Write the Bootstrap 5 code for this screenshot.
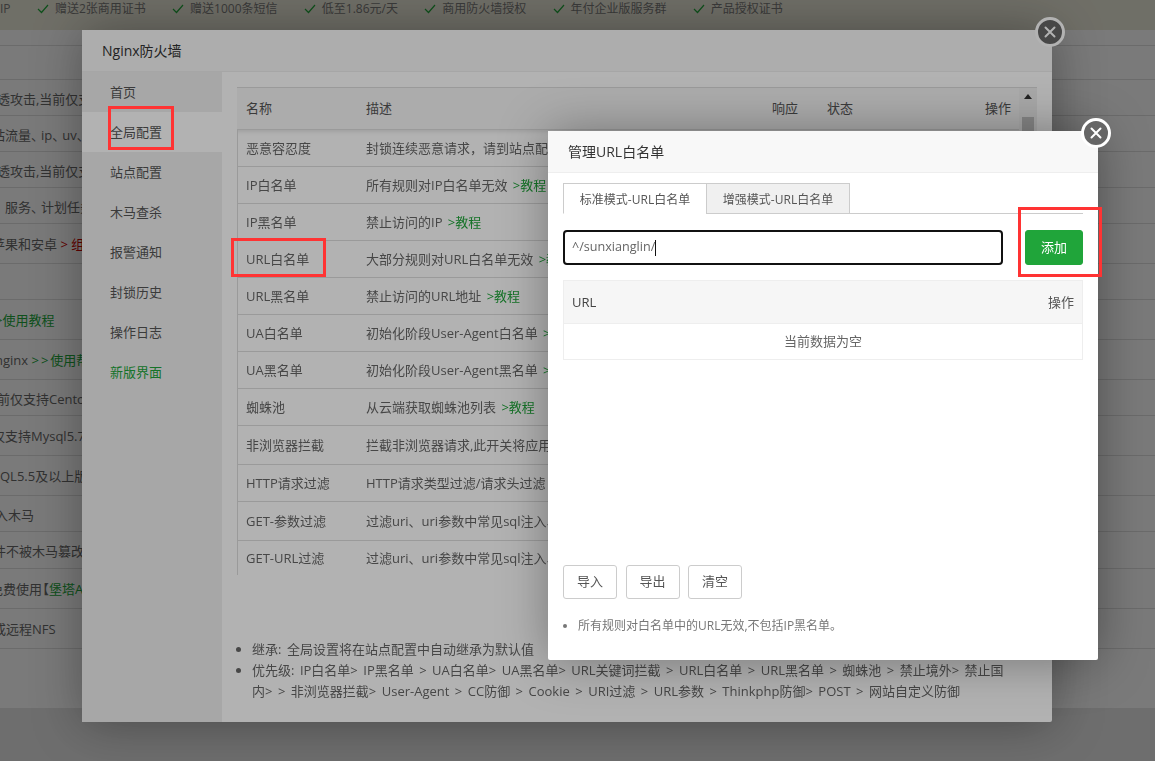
<!DOCTYPE html>
<html lang="zh">
<head>
<meta charset="utf-8">
<title>Nginx防火墙</title>
<link href="https://cdn.jsdelivr.net/npm/bootstrap@5.3.0/dist/css/bootstrap.min.css" rel="stylesheet">
<style>
html,body{margin:0;height:761px;overflow:hidden;background:#e2e2e2;}
body,button,input{font-family:"Open Sans","Noto Sans CJK SC",sans-serif;font-size:13px;color:#555;}
.topstrip{height:30px;background:#e6e4d4;font-size:12px;color:#777;gap:26.3px;white-space:nowrap;padding-bottom:12px;}
.tick{gap:6px;}
.bgpanel{background:#fbfbfb;height:678px;white-space:nowrap;overflow:hidden;}
.bgrow{height:36px;border-bottom:1px solid #ddd;color:#666;line-height:38px;overflow:hidden;}
.bgrow.tall{height:40px;line-height:41px;}
.bgrow.first{height:16px;}
.bgrow.mid{height:34px;}
.bgrow.wide{height:37px;}
.bgrow.cut3{text-indent:-3px;}
.bgrow.cut5{text-indent:-5px;}
.bgrow.cut7{text-indent:-7px;}
.bgrow.cut8{text-indent:-8px;}
.bgrow.cut10{text-indent:-10px;}
.bgrow.pad{text-indent:5px;}
.brk{margin-left:-6px;}
.dbl{letter-spacing:2px;}
.pn{margin-right:-3px;}
.gr{color:#20a53a;}
.tut{margin-left:2px;}
.rd{color:#c00;}
.dim{position:fixed;inset:0;background:#000;opacity:.3;}
.win{position:absolute;background:#fff;box-shadow:1px 1px 50px rgba(0,0,0,.35);border-radius:2px;}
.win-a{left:82px;top:30px;width:970px;height:692px;}
.win-b{left:548px;top:131px;width:550px;height:529px;}
.win-head{height:42px;padding-left:20px;line-height:42px;font-size:14px;color:#333;background:#f8f8f8;border-bottom:1px solid #eee;}
.win-body{height:650px;}
.sidebar{width:140px;background:#f0f0f0;flex:none;}
.side-item{height:40px;line-height:40px;padding-left:28px;color:#555;}
.side-item.active{background:#fff;}
.side-item.gr{color:#20a53a;}
.main-a{padding:15px 15px 0;}
.tbl-shell{height:488px;width:800px;overflow:hidden;}
.tbl-clip{width:782px;height:488px;overflow:hidden;}
.table.fw-tbl{width:782px;table-layout:fixed;margin:0;border-collapse:separate;border-spacing:0;--bs-table-bg:transparent;--bs-table-color:#555;}
.table.fw-tbl>thead>tr>th{height:43px;padding:1px 8px 0 9px;font-weight:400;background:#f6f6f6;border-bottom:1px solid #ddd;border-top:1px solid #ddd;vertical-align:middle;color:#555;}
.table.fw-tbl>tbody>tr>td{height:37px;padding:1px 9px 0;border-bottom:1px solid #ddd;vertical-align:middle;white-space:nowrap;overflow:hidden;color:#666;}
.table.fw-tbl>tbody>tr>td:first-child{border-left:1px solid #ddd;padding-left:8px;}
.table.fw-tbl>tbody>tr:first-child>td{box-shadow:inset 0 6px 5px -5px rgba(0,0,0,.14);}
.table.fw-tbl>tbody>tr.tall>td{height:39px;}
.table.fw-tbl>tbody>tr.end>td{height:35px;border-bottom:0;}
.col-nm{width:120px;}
.col-resp{width:55px;}
.col-st{width:146px;}
.thumb-track{width:18px;background:#f1f1f1;border-top:1px solid #ddd;height:488px;padding:0 3px;}
.arrow-up{width:0;height:0;border-left:4px solid transparent;border-right:4px solid transparent;border-bottom:5px solid #333;margin:6px auto 0;}
.thumb{height:60px;background:#c1c1c1;margin-top:18px;}
.notes{margin:64px 0 0;padding-left:15px;width:775px;color:#666;line-height:21px;word-spacing:2.1px;}
.win-b-body{padding:10px 15px 0;}
.tabbar{border-bottom:1px solid #ccc;height:31px;}
.tabx{width:144px;height:31px;line-height:31px;font-size:12px;text-align:center;border:1px solid #ccc;color:#555;background:#f0f0f0;}
.tabx.on{background:#fff;border-bottom-color:#fff;border-right:0;width:143px;}
.addrow{margin-top:16px;gap:22px;}
.input-box{width:440px;height:35px;line-height:29px;border:2px solid #111;border-radius:4px;padding:0 7px;font-size:12.6px;color:#666;background:#fff;}
.caret-bar{display:inline-block;width:1px;height:16px;background:#111;vertical-align:middle;}
.btn.btn-add{width:58px;height:35px;padding:0;font-size:13px;background:#20a53a;border:1px solid #20a53a;color:#fff;border-radius:3px;}
.rules{margin-top:15px;width:520px;border:1px solid #eee;}
.rules-h{height:43px;background:#f6f6f6;padding:0 8px;border-bottom:1px solid #eee;line-height:43px;color:#444;}
.rules-h span+span{color:#555;}
.rules-e{height:35px;line-height:35px;text-align:center;font-size:13px;color:#666;}
.btnrow{margin-top:205px;gap:8.5px;}
.btn.btn-plain{width:54px;height:34px;padding:0;font-size:13px;background:#fff;border:1px solid #ccc;color:#555;border-radius:3px;}
.hint{margin:17px 0 0;padding-left:15px;font-size:12px;color:#777;line-height:20px;}
.closer{position:absolute;width:30px;height:30px;border-radius:50%;border:3px solid #fff;background:#666;padding:0;display:flex;align-items:center;justify-content:center;}
.closer-a{left:1035px;top:17px;}
.closer-b{left:1081px;top:118px;}
.redbox{position:absolute;border:3px solid #f33;}
.rb-a{left:108px;top:106px;width:66px;height:44px;}
.rb-b{left:231px;top:238px;width:95px;height:39px;}
.rb-c{left:1018px;top:207px;width:84px;height:70px;}
</style>
</head>
<body>
<div class="d-flex align-items-center topstrip">
  <span>IP</span>
  <span class="d-flex align-items-center tick"><svg width="12" height="10" viewBox="0 0 12 10"><path d="M1 5l3.5 3.5L11 1" fill="none" stroke="#20a53a" stroke-width="1.2"/></svg>赠送2张商用证书</span>
  <span class="d-flex align-items-center tick"><svg width="12" height="10" viewBox="0 0 12 10"><path d="M1 5l3.5 3.5L11 1" fill="none" stroke="#20a53a" stroke-width="1.2"/></svg>赠送1000条短信</span>
  <span class="d-flex align-items-center tick"><svg width="12" height="10" viewBox="0 0 12 10"><path d="M1 5l3.5 3.5L11 1" fill="none" stroke="#20a53a" stroke-width="1.2"/></svg>低至1.86元/天</span>
  <span class="d-flex align-items-center tick"><svg width="12" height="10" viewBox="0 0 12 10"><path d="M1 5l3.5 3.5L11 1" fill="none" stroke="#20a53a" stroke-width="1.2"/></svg>商用防火墙授权</span>
  <span class="d-flex align-items-center tick"><svg width="12" height="10" viewBox="0 0 12 10"><path d="M1 5l3.5 3.5L11 1" fill="none" stroke="#20a53a" stroke-width="1.2"/></svg>年付企业版服务群</span>
  <span class="d-flex align-items-center tick"><svg width="12" height="10" viewBox="0 0 12 10"><path d="M1 5l3.5 3.5L11 1" fill="none" stroke="#20a53a" stroke-width="1.2"/></svg>产品授权证书</span>
</div>
<div class="bgpanel">
  <div class="bgrow first"></div>
  <div class="bgrow mid"></div>
  <div class="bgrow cut3">透攻击,当前仅支持Nginx</div>
  <div class="bgrow cut8">站流量<span class="pn">、</span>ip<span class="pn">、</span>uv、pv</div>
  <div class="bgrow cut3">透攻击,当前仅支持Apache</div>
  <div class="bgrow pad">服务<span class="pn">、</span>计划任务</div>
  <div class="bgrow tall cut8">苹果和安卓 <span class="rd">&gt; 组</span></div>
  <div class="bgrow"></div>
  <div class="bgrow tall cut5"><span class="gr">&gt;使用教程</span></div>
  <div class="bgrow tall cut5">nginx <span class="gr"><span class="dbl">&gt;&gt;</span>使用帮助</span></div>
  <div class="bgrow cut3">前仅支持Centos7</div>
  <div class="bgrow tall cut8">仅支持Mysql5.7</div>
  <div class="bgrow tall">QL5.5及以上版本</div>
  <div class="bgrow cut5">入木马</div>
  <div class="bgrow wide cut7">件不被木马篡改</div>
  <div class="bgrow tall cut10">免费使用<span class="brk">【</span><span class="gr">堡塔A</span></div>
  <div class="bgrow tall cut7">或远程NFS</div>
</div>
<div class="dim"></div>

<section class="win win-a">
  <div class="win-head">Nginx防火墙</div>
  <div class="d-flex win-body">
    <nav class="sidebar">
      <div class="side-item">首页</div>
      <div class="side-item active">全局配置</div>
      <div class="side-item">站点配置</div>
      <div class="side-item">木马查杀</div>
      <div class="side-item">报警通知</div>
      <div class="side-item">封锁历史</div>
      <div class="side-item">操作日志</div>
      <div class="side-item gr">新版界面</div>
    </nav>
    <div class="main-a flex-grow-1">
      <div class="d-flex tbl-shell">
        <div class="tbl-clip">
          <table class="table fw-tbl">
            <colgroup><col class="col-nm"><col><col class="col-resp"><col class="col-st"><col class="col-resp"></colgroup>
            <thead><tr><th>名称</th><th>描述</th><th>响应</th><th>状态</th><th class="text-end">操作</th></tr></thead>
            <tbody>
              <tr><td>恶意容忍度</td><td colspan="4">封锁连续恶意请求，请到站点配置调整容忍阈值</td></tr>
              <tr><td>IP白名单</td><td colspan="4">所有规则对IP白名单无效 <span class="gr tut">&gt;教程</span></td></tr>
              <tr><td>IP黑名单</td><td colspan="4">禁止访问的IP <span class="gr tut">&gt;教程</span></td></tr>
              <tr><td>URL白名单</td><td colspan="4">大部分规则对URL白名单无效 <span class="gr tut">&gt;教程</span></td></tr>
              <tr><td>URL黑名单</td><td colspan="4">禁止访问的URL地址 <span class="gr tut">&gt;教程</span></td></tr>
              <tr><td>UA白名单</td><td colspan="4">初始化阶段User-Agent白名单 <span class="gr tut">&gt;教程</span></td></tr>
              <tr><td>UA黑名单</td><td colspan="4">初始化阶段User-Agent黑名单 <span class="gr tut">&gt;教程</span></td></tr>
              <tr><td>蜘蛛池</td><td colspan="4">从云端获取蜘蛛池列表 <span class="gr tut">&gt;教程</span></td></tr>
              <tr class="tall"><td>非浏览器拦截</td><td colspan="4">拦截非浏览器请求,此开关将应用到全部站点</td></tr>
              <tr><td>HTTP请求过滤</td><td colspan="4">HTTP请求类型过滤/请求头过滤</td></tr>
              <tr class="tall"><td>GET-参数过滤</td><td colspan="4">过滤uri、uri参数中常见sql注入、xss等攻击</td></tr>
              <tr class="end"><td>GET-URL过滤</td><td colspan="4">过滤uri、uri参数中常见sql注入、xss等攻击</td></tr>
            </tbody>
          </table>
        </div>
        <div class="thumb-track"><div class="arrow-up"></div><div class="thumb"></div></div>
      </div>
      <ul class="notes">
        <li>继承: 全局设置将在站点配置中自动继承为默认值</li>
        <li>优先级: IP白名单&gt; IP黑名单 &gt; UA白名单&gt; UA黑名单&gt; URL关键词拦截 &gt; URL白名单 &gt; URL黑名单 &gt; 蜘蛛池 &gt; 禁止境外&gt; 禁止国内&gt; &gt; 非浏览器拦截&gt; User-Agent &gt; CC防御 &gt; Cookie &gt; URI过滤 &gt; URL参数 &gt; Thinkphp防御&gt; POST &gt; 网站自定义防御</li>
      </ul>
    </div>
  </div>
</section>
<button class="closer closer-a" aria-label="关闭"><svg width="14" height="14" viewBox="0 0 14 14"><path d="M2.5 2.5l9 9M11.5 2.5l-9 9" stroke="#fff" stroke-width="2" stroke-linecap="round"/></svg></button>

<div class="dim"></div>

<section class="win win-b">
  <div class="win-head">管理URL白名单</div>
  <div class="win-b-body">
    <div class="d-flex tabbar">
      <div class="tabx on">标准模式-URL白名单</div>
      <div class="tabx">增强模式-URL白名单</div>
    </div>
    <div class="d-flex addrow">
      <div class="input-box">^/sunxianglin/<span class="caret-bar"></span></div>
      <button class="btn btn-add">添加</button>
    </div>
    <div class="rules">
      <div class="rules-h d-flex justify-content-between"><span>URL</span><span>操作</span></div>
      <div class="rules-e">当前数据为空</div>
    </div>
    <div class="d-flex btnrow">
      <button class="btn btn-plain">导入</button>
      <button class="btn btn-plain">导出</button>
      <button class="btn btn-plain">清空</button>
    </div>
    <ul class="hint"><li>所有规则对白名单中的URL无效,不包括IP黑名单。</li></ul>
  </div>
</section>
<button class="closer closer-b" aria-label="关闭"><svg width="14" height="14" viewBox="0 0 14 14"><path d="M2.5 2.5l9 9M11.5 2.5l-9 9" stroke="#fff" stroke-width="2" stroke-linecap="round"/></svg></button>

<div class="redbox rb-a"></div>
<div class="redbox rb-b"></div>
<div class="redbox rb-c"></div>
<script src="https://cdn.jsdelivr.net/npm/bootstrap@5.3.0/dist/js/bootstrap.bundle.min.js"></script>
</body>
</html>
